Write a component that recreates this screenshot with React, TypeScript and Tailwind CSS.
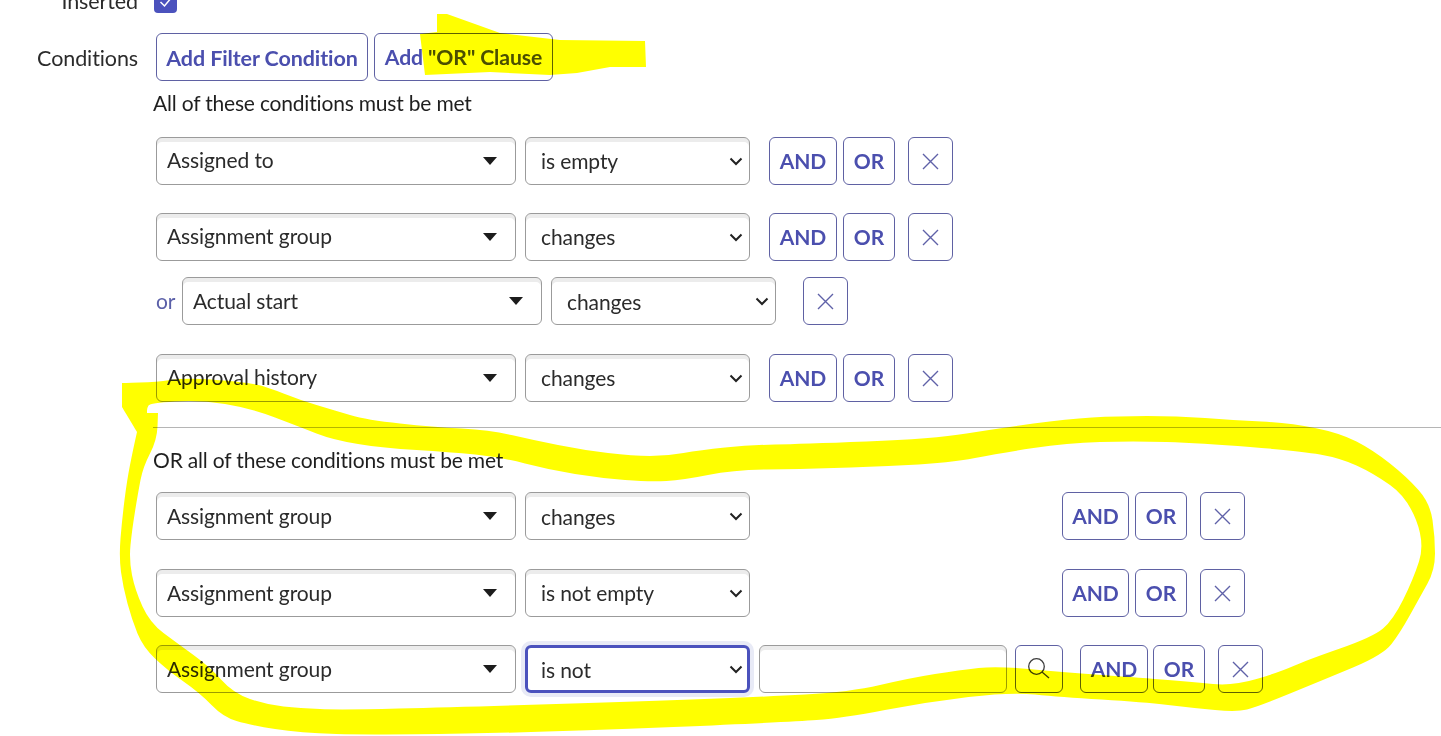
import React from "react";

const Chevron = () => (
  <svg width="14" height="9" viewBox="0 0 14 9" fill="none" className="shrink-0">
    <path d="M1.5 1.5 7 7l5.5-5.5" stroke="#222" strokeWidth="2" />
  </svg>
);

const Caret = () => (
  <svg width="14" height="8" viewBox="0 0 14 8" className="shrink-0">
    <path d="M0 0h14L7 8z" fill="#1c1c1c" />
  </svg>
);

const Field = ({ label, low }: { label: string; low?: boolean }) => (
  <div className="flex h-[48px] w-[360px] shrink-0 items-center justify-between rounded-[6px] border border-[#9b9b9b] bg-white pl-[10px] pr-[18px] text-[#2b2b2b] shadow-[inset_0_4px_0_#ececec]">
    <span className={low ? "pb-[1px] leading-none" : "pb-[3px] leading-none"}>{label}</span>
    <Caret />
  </div>
);

const Op = ({ label, focus, low }: { label: string; focus?: boolean; low?: boolean }) => (
  <div
    className={
      focus
        ? "ml-[9px] flex h-[48px] w-[225px] shrink-0 items-center justify-between rounded-[6px] border-[3px] border-[#4b52bd] bg-white pl-[13px] pr-[4px] text-[#2b2b2b] shadow-[0_0_0_4px_#e8eaf6]"
        : "ml-[9px] flex h-[48px] w-[225px] shrink-0 items-center justify-between rounded-[6px] border border-[#9b9b9b] bg-white pl-[15px] pr-[6px] text-[#2b2b2b] shadow-[inset_0_4px_0_#ececec]"
    }
  >
    <span className={low ? "pt-[1px] leading-none" : "pb-[1px] leading-none"}>{label}</span>
    <Chevron />
  </div>
);

const Btn = ({ children, className }: { children: React.ReactNode; className: string }) => (
  <div
    className={`flex h-[48px] shrink-0 items-center justify-center rounded-[6px] border border-[#5f61a3] bg-white font-bold text-[#4b4fae] ${className}`}
  >
    {children}
  </div>
);

const Close = ({ className }: { className: string }) => (
  <Btn className={`w-[45px] ${className}`}>
    <svg width="17" height="17" viewBox="0 0 17 17" fill="none">
      <path d="M1 1l15 15M16 1 1 16" stroke="#5f61a8" strokeWidth="1.4" />
    </svg>
  </Btn>
);

const Actions = ({ andClass, orClass }: { andClass: string; orClass: string }) => (
  <>
    <Btn className={andClass}>AND</Btn>
    <Btn className={orClass}>OR</Btn>
    <Close className="ml-[13px]" />
  </>
);

const Row = ({ className, children }: { className: string; children: React.ReactNode }) => (
  <div className={`flex items-center pl-[156px] ${className}`}>{children}</div>
);

type P = [number, number];

const smooth = (pts: P[]) => {
  const mid = (a: P, b: P): P => [(a[0] + b[0]) / 2, (a[1] + b[1]) / 2];
  const start = mid(pts[pts.length - 1], pts[0]);
  let d = `M${start[0]} ${start[1]}`;
  pts.forEach((p, i) => {
    const m = mid(p, pts[(i + 1) % pts.length]);
    d += ` Q${p[0]} ${p[1]} ${m[0]} ${m[1]}`;
  });
  return d + " Z";
};

const outer: P[] = [
  [122, 383], [122, 383], [157, 382], [183, 378], [220, 380], [250, 383], [267, 387], [300, 400], [333, 410], [367, 420],
  [433, 427], [490, 430], [533, 440], [583, 450], [633, 456], [667, 456], [700, 450], [750, 445], [800, 444], [933, 439],
  [1000, 428], [1067, 419], [1117, 416], [1177, 416], [1233, 420], [1290, 423], [1340, 433], [1373, 450], [1407, 477],
  [1430, 503], [1435, 537], [1435, 570], [1420, 597], [1400, 633], [1383, 655], [1323, 680], [1257, 707], [1237, 712],
  [1193, 708], [1143, 702], [1060, 697], [1010, 692], [927, 702], [843, 718], [790, 722], [557, 732], [373, 735],
  [300, 733], [250, 725], [223, 717], [200, 693], [167, 670], [143, 647], [132, 620], [123, 587], [119, 557], [122, 520],
  [127, 480], [133, 450], [137, 432], [137, 432], [122, 407], [122, 407],
];

const inner: P[] = [
  [147, 408], [147, 413], [147, 413], [158, 413], [158, 413], [157, 440], [143, 467], [138, 493], [132, 530], [129, 560],
  [135, 590], [150, 623], [177, 643], [210, 667], [233, 693], [267, 705], [300, 708], [340, 710], [457, 707], [623, 702],
  [760, 697], [850, 692], [910, 678], [960, 670], [997, 666], [1060, 672], [1143, 678], [1193, 682], [1233, 686],
  [1280, 672], [1307, 660], [1373, 637], [1393, 620], [1413, 580], [1425, 543], [1407, 497], [1373, 473], [1340, 458],
  [1300, 451], [1200, 443], [1133, 441], [1067, 443], [1000, 453], [950, 463], [867, 467], [800, 469], [733, 470],
  [683, 480], [650, 482], [600, 478], [550, 470], [500, 457], [450, 452], [383, 448], [333, 440], [300, 427], [250, 408],
  [200, 400], [150, 403],
];

const scribble = `${smooth(outer)} ${smooth(inner)}`;

export default function App() {
  return (
    <div className="relative h-[736px] w-[1441px] overflow-hidden bg-white font-['Lato',sans-serif] text-[21px] tracking-[-0.1px] text-[#2b2b2b]">
      <div className="-mt-[11px] flex h-[24px] items-end">
        <div className="w-[138px] text-right text-[21.5px] leading-[24px]">Inserted</div>
        <div className="ml-[16px] flex h-[23px] w-[23px] items-center justify-center rounded-[4px] bg-[#4b52bd]">
          <svg width="14" height="12" viewBox="0 0 14 12" fill="none">
            <path d="M1.5 6 5.5 10 12.5 1.5" stroke="#fff" strokeWidth="1.5" />
          </svg>
        </div>
      </div>

      <div className="mt-[20px] flex items-center">
        <div className="w-[138px] pt-[2px] text-right text-[21.5px]">Conditions</div>
        <Btn className="ml-[18px] w-[212px] pt-[2px] text-[21.5px]">Add Filter Condition</Btn>
        <Btn className="ml-[6px] w-[179px] pt-[2px] text-[21.2px]">Add "OR" Clause</Btn>
      </div>

      <div className="mt-[9px] h-[26px] pl-[153px] leading-[26px] tracking-[-0.19px] text-[#1f1f1f]">All of these conditions must be met</div>

      <Row className="mt-[21px]">
        <Field label="Assigned to" />
        <Op label="is empty" />
        <Actions andClass="ml-[19px] w-[68px]" orClass="ml-[6px] w-[52px]" />
      </Row>
      <Row className="mt-[28px]">
        <Field label="Assignment group" />
        <Op label="changes" />
        <Actions andClass="ml-[19px] w-[68px]" orClass="ml-[6px] w-[52px]" />
      </Row>
      <Row className="mt-[16px]">
        <span className="w-[26px] text-[#5a5fa8]">or</span>
        <Field label="Actual start" low />
        <Op label="changes" low />
        <Close className="ml-[27px]" />
      </Row>
      <Row className="mt-[29px]">
        <Field label="Approval history" />
        <Op label="changes" />
        <Actions andClass="ml-[19px] w-[68px]" orClass="ml-[6px] w-[52px]" />
      </Row>

      <div className="ml-[153px] mt-[25px] border-t border-[#b5b5b5]" />

      <div className="mt-[19px] h-[26px] pl-[153px] leading-[26px] tracking-[-0.18px] text-[#1f1f1f]">OR all of these conditions must be met</div>

      <Row className="mt-[19px]">
        <Field label="Assignment group" low />
        <Op label="changes" low />
        <Actions andClass="ml-[312px] w-[67px]" orClass="ml-[6px] w-[52px]" />
      </Row>
      <Row className="mt-[29px]">
        <Field label="Assignment group" low />
        <Op label="is not empty" />
        <Actions andClass="ml-[312px] w-[67px]" orClass="ml-[6px] w-[52px]" />
      </Row>
      <Row className="mt-[28px]">
        <Field label="Assignment group" low />
        <Op label="is not" focus low />
        <div className="ml-[9px] h-[48px] w-[248px] shrink-0 rounded-[6px] border border-[#9b9b9b] bg-white shadow-[inset_0_4px_0_#ececec]" />
        <Btn className="ml-[8px] w-[48px]">
          <svg width="24" height="24" viewBox="0 0 24 24" fill="none">
            <circle cx="9.5" cy="9.5" r="7.8" stroke="#3d3d3d" strokeWidth="1.3" />
            <path d="m15 15 7 6" stroke="#3d3d3d" strokeWidth="1.3" />
          </svg>
        </Btn>
        <Actions andClass="ml-[17px] w-[68px]" orClass="ml-[5px] w-[52px]" />
      </Row>

      <svg
        className="pointer-events-none absolute left-0 top-0 mix-blend-multiply"
        width="1441"
        height="736"
        viewBox="0 0 1441 736"
      >
        <path
          d="M437 14 L447 14 Q475 24 500 33 L560 40 L645 41 L646 67 L610 67 L577 73 L550 75 L490 72 L425 75 L420 34 L437 32 Z"
          fill="#ffff00"
        />
        <path d={scribble} fill="#ffff00" fillRule="evenodd" />
      </svg>
    </div>
  );
}
